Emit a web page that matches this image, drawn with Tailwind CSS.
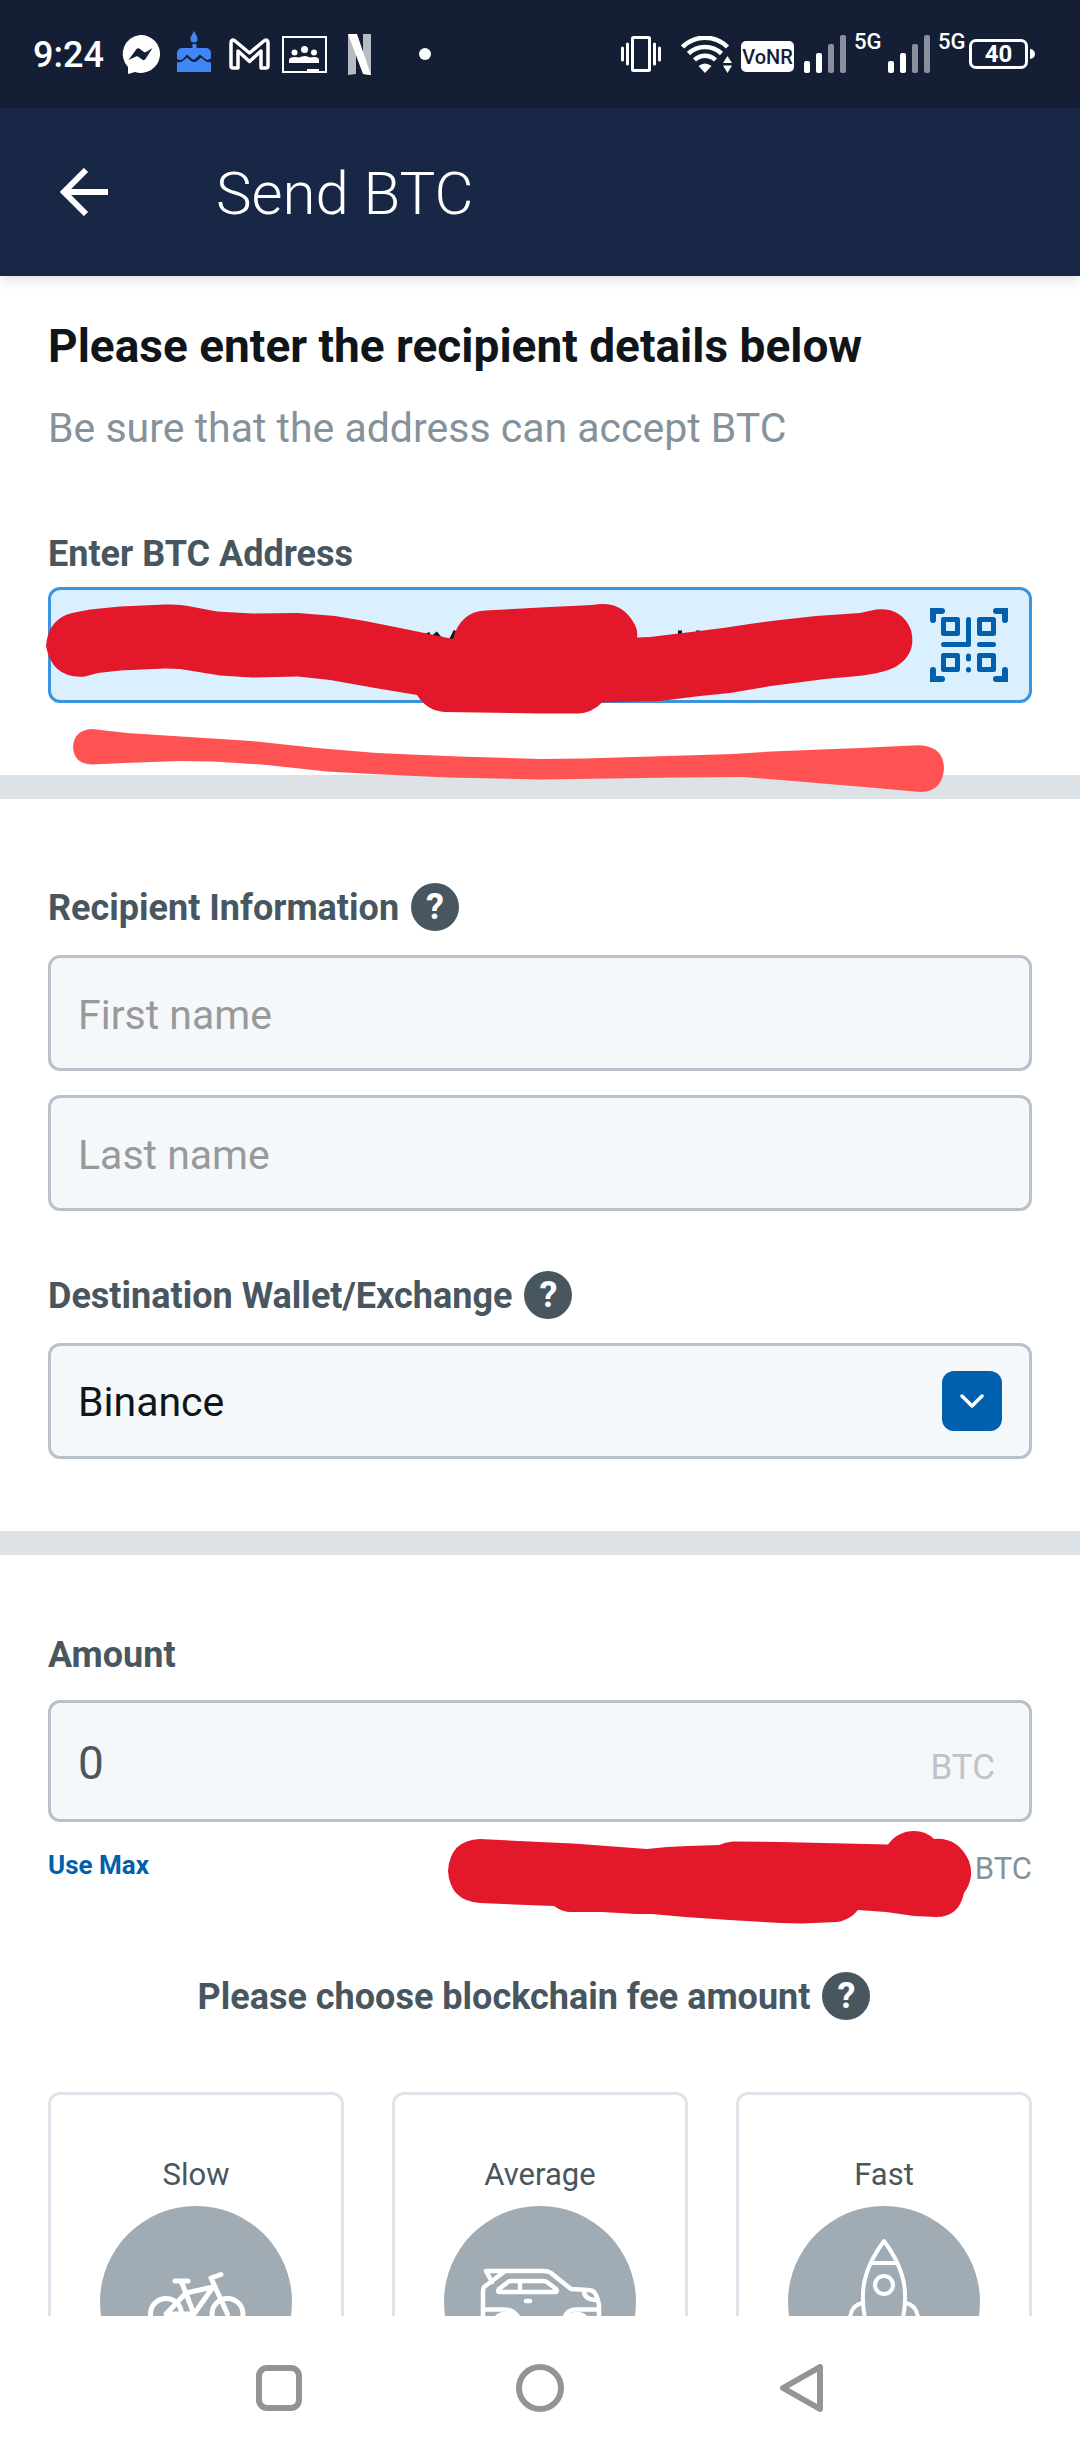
<!DOCTYPE html>
<html lang="en">
<head>
    <meta charset="UTF-8">
    <meta name="viewport" content="width=device-width, initial-scale=1.0">
    <title>Send BTC</title>
    <script src="https://cdn.jsdelivr.net/npm/@tailwindcss/browser@4"></script>
</head>
<body class="h-screen flex flex-col bg-white font-['Roboto',sans-serif] text-[#485660]">

    <!-- Status bar -->
    <div class="flex items-center justify-between h-[108px] shrink-0 bg-[#141f36] pl-[33px] pr-[45px] text-white">
        <div class="flex items-center">
            <span class="pt-[2px] text-[36px] leading-[44px] font-medium">9:24</span>
            <svg class="ml-4 w-10 h-10" viewBox="0 0 40 40">
                <path fill="#fff" d="M20 1a19 19 0 1 1-5 37l-7 2v-7A19 19 0 0 1 20 1z"/>
                <path fill="#141f36" d="M8.500 26l8-11q1.500-1.500 3.500 0l4 3q1 .500 2 0l6.500-4-7 11q-1.500 2-3.500.500l-4-3q-1-.500-2 0z"/>
            </svg>
            <svg class="ml-[17px] w-[34px] h-[46px]" viewBox="0 0 34 46" fill="#4285f4">
                <path d="M17 0c2 4 3.500 5 3.500 8a3.500 3.500 0 0 1-7 0c0-3 1.500-4 3.500-8z"/>
                <path d="M15.500 13h4v4H29a5 5 0 0 1 5 5v5c-3 3-5 2-7 0l-4-3.500-5 4.500q-1.500 1-3 0l-5-4.500L6 28q-3 2-6 0v-6a5 5 0 0 1 5-5h10.500z"/>
                <path d="M0 31q4 1 7-2l3-2.500 4 3.500q3 2 6 0l4-3.500 3 2.500q3 3 7 2v10H0z"/>
            </svg>
            <svg class="ml-[18px] w-[41px] h-8" viewBox="0 0 41 32" fill="none" stroke="#fff" stroke-width="3.500" stroke-linejoin="round">
                <path d="M2 28V5q0-4 3.500-2.500L20.500 15l15-12.500Q39 1 39 5v23q0 2-2 2h-5V13L20.500 23.500 9 13v17H4q-2 0-2-2z"/>
            </svg>
            <svg class="ml-3 w-[45px] h-[37px]" viewBox="0 0 45 37">
                <rect x="1" y="1" width="43" height="35" fill="none" stroke="#fff" stroke-width="2"/>
                <g fill="#fff">
                    <circle cx="22.500" cy="13.500" r="3.500"/><circle cx="12.500" cy="16.500" r="3"/><circle cx="32" cy="16.500" r="3"/>
                    <path d="M7 27v-3q0-3 6-3 3 0 4 .500 6-3 11 0 2-.500 4-.500 5 0 5 3v3zM25 33h12v3H25z"/>
                </g>
            </svg>
            <svg class="ml-[21px] w-[23px] h-[41px]" viewBox="0 0 23 41">
                <path fill="#b7bbc3" d="M0 0h8v40l-8 1zM15 0h8v41l-8-1z"/>
                <path fill="#fff" d="M0 0h9l14 41-8-1z"/>
            </svg>
            <span class="ml-12 size-3 rounded-full bg-white"></span>
        </div>

        <div class="flex items-center h-full">
            <svg class="w-10 h-9" viewBox="0 0 40 36" fill="none" stroke="#fff" stroke-width="3">
                <rect x="11.500" y="1.500" width="17" height="33" rx="1"/>
                <path stroke-linecap="round" d="M1.500 12v12M6.500 8v20M33.500 8v20M38.500 12v12"/>
            </svg>
            <svg class="ml-5 w-[51px] h-[37px]" viewBox="0 0 51 37">
                <g fill="none" stroke="#fff" stroke-width="4.500">
                    <path d="M1.500 11a32 32 0 0 1 45 0"/>
                    <path d="M7.500 17.500a24 24 0 0 1 33 0"/>
                    <path d="M13.500 24a15 15 0 0 1 21 0"/>
                </g>
                <path fill="#fff" d="M24 37l-6.500-7q6.500-5 13 0zM46.500 20l4.500 7h-9zM42 29.500h9L46.500 37z"/>
            </svg>
            <span class="ml-[9px] mt-1 w-[53px] h-[31px] rounded-[5px] bg-white text-[#141f36] text-[20px] leading-8 font-medium text-center">VoNR</span>
            <svg class="ml-[10px] w-[42px] h-[38px]" viewBox="0 0 42 38">
                <g fill="#fff"><rect y="26" width="6" height="12" rx="2"/><rect x="12" y="18" width="6" height="20" rx="2"/></g>
                <g fill="#8a8f9b"><rect x="24" y="9" width="6" height="29" rx="2"/><rect x="36" width="6" height="38" rx="2"/></g>
            </svg>
            <span class="ml-2 pt-7 self-start w-[25px] text-[22px] leading-7 font-medium">5G</span>
            <svg class="ml-[9px] w-[42px] h-[38px]" viewBox="0 0 42 38">
                <g fill="#fff"><rect y="26" width="6" height="12" rx="2"/><rect x="12" y="18" width="6" height="20" rx="2"/></g>
                <g fill="#8a8f9b"><rect x="24" y="9" width="6" height="29" rx="2"/><rect x="36" width="6" height="38" rx="2"/></g>
            </svg>
            <span class="ml-2 pt-7 self-start w-[25px] text-[22px] leading-7 font-medium">5G</span>
            <span class="ml-[6px] w-[59px] h-[30px] rounded-[7px] border-3 border-white text-[24px] leading-6 font-bold text-center">40</span>
            <span class="ml-[2px] w-[5px] h-[10px] rounded-r-full bg-white"></span>
        </div>
    </div>

    <!-- App bar -->
    <header class="relative z-10 flex items-center h-[168px] shrink-0 bg-[#172745] pl-[60px] text-white shadow-[0_4px_12px_rgba(0,0,0,0.12)]">
        <button type="button" aria-label="Back">
            <svg class="size-12" viewBox="0 0 48 48" fill="none" stroke="#fff" stroke-width="6">
                <path d="M48 24H5M26 2L4 24l22 22"/>
            </svg>
        </button>
        <h1 class="ml-[108px] pt-1 text-[60px] leading-[72px] font-light">Send BTC</h1>
    </header>

    <main class="flex-1 min-h-0 overflow-y-auto [scrollbar-width:none]">

        <section class="relative px-12 pt-10 pb-[72px] border-b-24 border-[#dde2e6]">
            <h2 class="text-[46px] leading-[60px] font-bold text-[#101519]">Please enter the recipient details below</h2>
            <p class="mt-6 text-[41px] leading-[56px] text-[#86929b]">Be sure that the address can accept BTC</p>
            <label for="address" class="block mt-[74px] text-[36px] leading-[48px] font-bold">Enter BTC Address</label>
            <div class="mt-[9px] h-[116px] flex items-center rounded-xl border-3 border-[#3b95de] bg-[#daf0fe] pr-[21px]">
                <input id="address" type="text" class="flex-1 min-w-0 h-full pl-[27px] text-[41px] text-[#101519] outline-none">
                <button type="button" aria-label="Scan QR code">
                    <svg class="w-[78px] h-[74px]" viewBox="0 0 78 74" fill="none" stroke="#0060ae" stroke-width="5">
                        <g stroke-width="6" stroke-linecap="round">
                            <path d="M3 12V3h9M66 3h9v9M3 62v9h9M66 71h9v-9"/>
                        </g>
                        <g stroke-linejoin="round">
                            <rect x="13.500" y="11.500" width="14" height="14"/>
                            <rect x="49.500" y="11.500" width="14" height="14"/>
                            <rect x="13.500" y="47.500" width="14" height="14"/>
                            <rect x="49.500" y="47.500" width="14" height="14"/>
                        </g>
                        <path stroke-linecap="round" stroke-linejoin="round" d="M13.500 36.500h25v-25M49.500 36.500h14M38.500 48v3M38.500 61.500v.500"/>
                    </svg>
                </button>
            </div>
            <!-- marker strokes over the address -->
            <svg class="absolute left-0 top-[311px] w-full pointer-events-none" viewBox="0 0 1080 220">
                <path stroke="#101519" stroke-width="5" d="M427 46l4 8M435 46l8 10M456 44l-6 12M678 46h4M696 46h4"/>
                <path fill="#e3192b" d="M46 59Q48 32 72 26L90 22.500 120 19.500 165 17.500Q180 17 188 19L217 24.500 252 26.500 298 26 335 29 365 34 410 43 453 52Q460 25 485 23.500L540 20.500 592 18Q622 12 635 38 638 44 637 50.500L650 50 683 46 723 41 753 36.500 780 33 816 29 860 26 876 22.500Q902 20 911 43 917 66 897 79 885 86 858 89L825 92 771 99 730 106 700 109 660 114 602 115.500Q592 126 578 126.500L540 126.500 445 125Q427 124 417 108L375 101 330 93 298 89.500 252 90.500 220 88.500 180 82 165 81.500 120 83.500 98 86 85 89.500Q52 92 46 59z"/>
                <path fill="#ff5353" d="M73 160Q74 143 92 142L127 146 251 154 317 161 377 166 458 169.500 540 172 585 171.500 733 167 771 164.500 860 161 912 158.500Q943 156 944 181 943 204 921 205L864 200 781 193 743 190 678 190.500 540 192.500 448 190.500 372 187 327 184.500 262 177.500 213 174.500 179 174 124 176 92 177.500Q74 177 73 160z"/>
            </svg>
        </section>

        <section class="px-12 pt-[84px] pb-[72px] border-b-24 border-[#dde2e6]">
            <div class="flex items-center">
                <label for="first-name" class="pt-[3px] text-[36px] leading-[45px] font-bold">Recipient Information</label>
                <button type="button" aria-label="Help" class="mx-3 size-12 rounded-full bg-[#485660] text-white text-[36px] leading-[48px] font-bold">?</button>
            </div>
            <input id="first-name" type="text" placeholder="First name" class="block mt-6 w-full h-[116px] rounded-xl border-3 border-[#b9c2ca] bg-[#f4f8fb] px-[27px] pt-1 text-[41px] placeholder:text-[#999]">
            <input type="text" aria-label="Last name" placeholder="Last name" class="block mt-6 w-full h-[116px] rounded-xl border-3 border-[#b9c2ca] bg-[#f4f8fb] px-[27px] pt-1 text-[41px] placeholder:text-[#999]">

            <div class="flex items-center mt-[60px]">
                <label for="wallet" class="pt-[3px] text-[36px] leading-[45px] font-bold">Destination Wallet/Exchange</label>
                <button type="button" aria-label="Help" class="mx-3 size-12 rounded-full bg-[#485660] text-white text-[36px] leading-[48px] font-bold">?</button>
            </div>
            <div class="relative mt-6">
                <select id="wallet" class="block w-full h-[116px] appearance-none rounded-xl border-3 border-[#b9c2ca] bg-[#f4f8fb] px-[27px] pt-1 text-[41px] text-[#101519]">
                    <option>Binance</option>
                </select>
                <span class="absolute right-[30px] top-7 size-[60px] flex items-center justify-center rounded-xl bg-[#0060ae] pointer-events-none">
                    <svg class="w-6 h-[14px]" viewBox="0 0 24 14" fill="none" stroke="#fff" stroke-width="3.500" stroke-linecap="round" stroke-linejoin="round">
                        <path d="M2 2l10 10L22 2"/>
                    </svg>
                </span>
            </div>
        </section>

        <section class="relative px-12 pt-[76px] pb-12">
            <label for="amount" class="block text-[36px] leading-[48px] font-bold">Amount</label>
            <div class="flex items-baseline mt-[21px] h-[122px] rounded-xl border-3 border-[#b9c2ca] bg-[#f4f8fb] pl-[27px] pr-[34px]">
                <input id="amount" type="text" value="0" class="flex-1 min-w-0 h-full pt-1 text-[46px] outline-none">
                <span class="text-[35px] text-[#bcc3c9]">BTC</span>
            </div>
            <div class="flex items-start justify-between mt-[25px]">
                <button type="button" class="text-[26px] leading-9 font-bold text-[#0060ae]">Use Max</button>
                <span class="text-[31px] leading-[44px] text-[#86929b]">BTC</span>
            </div>
            <!-- marker stroke over the balance -->
            <svg class="absolute left-0 top-[265px] w-full pointer-events-none" viewBox="0 0 1080 120">
                <path fill="#e3192b" d="M448 51Q450 20 480 19L540 22 573 23.500 647 29 667 27 688 26 719 25Q725 22 733 21.500L781 22 888 24.500Q898 11 914 11 926 11 934 19 958 17 969 41 975 58 964 73 959 97 936 97L914 96 886 92 858 90Q850 100 837 102L802 103.500 781 103 729 100 685 97 652 94 636 94 602 92 571 92Q562 92 554 86L540 85.500 480 83Q450 81 448 51z"/>
            </svg>

            <div class="flex items-center justify-center mt-[81px]">
                <h3 class="pt-[3px] text-[36px] leading-[45px] font-bold">Please choose blockchain fee amount</h3>
                <button type="button" aria-label="Help" class="mx-3 size-12 rounded-full bg-[#485660] text-white text-[36px] leading-[48px] font-bold">?</button>
            </div>

            <div class="grid grid-cols-3 gap-12 mt-[72px]">
                <button type="button" class="flex flex-col items-center rounded-xl border-3 border-[#dde3e8] pt-[60px] pb-[60px]">
                    <span class="text-[31px] leading-10">Slow</span>
                    <svg class="mt-[11px] size-48 rounded-full bg-[#a1abb3]" viewBox="0 0 192 192" fill="none" stroke="#fff" stroke-width="5" stroke-linecap="round" stroke-linejoin="round">
                        <circle cx="66" cy="108" r="15.500"/><circle cx="127.500" cy="108" r="15.500"/>
                        <path d="M75 75h13M81.500 76L94 108H66l20-21 27-6-19 27M127.500 108L111 72l10-3.500"/>
                    </svg>
                </button>
                <button type="button" class="flex flex-col items-center rounded-xl border-3 border-[#dde3e8] pt-[60px] pb-[60px]">
                    <span class="text-[31px] leading-10">Average</span>
                    <svg class="mt-[11px] size-48 rounded-full bg-[#a1abb3]" viewBox="0 0 192 192" fill="none" stroke="#fff" stroke-width="4.500" stroke-linecap="round" stroke-linejoin="round">
                        <path d="M48 76l-6-11h58q4 0 7 2l20 16 17 1q6 0 8 5 3 7 3 12v16q0 5-5 5h-3M60 66L40 81q-1 2-1 4v32q0 5 5 5h3M77 122h41"/>
                        <path d="M67 75h32q2 0 4 1l9 7q2 3-1 3H55q-2-1 0-3l9-7q1-1 3-1zM76 75v11M82 95h4"/>
                        <path d="M39 103.500h21q10 0 15 9M154 103.500h-22q-9 0-12 9M140 86q1 8 13 8"/>
                        <circle cx="61" cy="120" r="12"/><circle cx="133" cy="120" r="12"/>
                    </svg>
                </button>
                <button type="button" class="flex flex-col items-center rounded-xl border-3 border-[#dde3e8] pt-[60px] pb-[60px]">
                    <span class="text-[31px] leading-10">Fast</span>
                    <svg class="mt-[11px] size-48 rounded-full bg-[#a1abb3]" viewBox="0 0 192 192" fill="none" stroke="#fff" stroke-width="4" stroke-linecap="round" stroke-linejoin="round">
                        <path d="M96 35Q76 62 75 87t9 45h24q10-20 9-45T96 35zM83 57h26"/>
                        <circle cx="96" cy="79" r="9"/>
                        <path d="M74 97q-12 3-12 17v16l16-8M118 97q12 3 12 17v16l-16-8"/>
                    </svg>
                </button>
            </div>
        </section>
    </main>

    <!-- System navigation -->
    <nav class="grid grid-cols-3 items-center justify-items-center h-36 shrink-0 bg-white px-[148px]">
        <button type="button" aria-label="Recent apps" class="size-[46px] rounded-[11px] border-6 border-[#949494]"></button>
        <button type="button" aria-label="Home" class="size-12 rounded-full border-6 border-[#949494]"></button>
        <button type="button" aria-label="Back">
            <svg class="w-[43px] h-12" viewBox="0 0 43 48" fill="none" stroke="#949494" stroke-width="6" stroke-linejoin="round">
                <path d="M40 3v42L3 24z"/>
            </svg>
        </button>
    </nav>
</body>
</html>
